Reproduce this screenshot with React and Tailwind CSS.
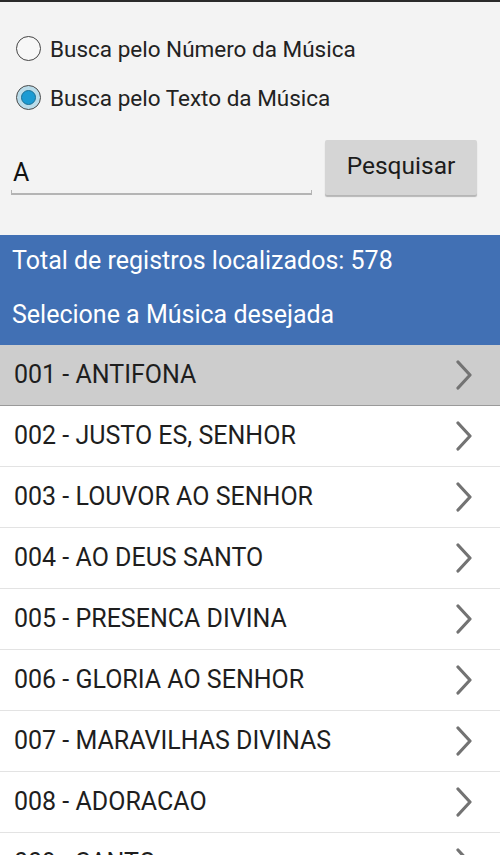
import { useState } from 'react'

const SONGS = [
  '001 - ANTIFONA',
  '002 - JUSTO ES, SENHOR',
  '003 - LOUVOR AO SENHOR',
  '004 - AO DEUS SANTO',
  '005 - PRESENCA DIVINA',
  '006 - GLORIA AO SENHOR',
  '007 - MARAVILHAS DIVINAS',
  '008 - ADORACAO',
  '009 - SANTO',
]

function Chevron() {
  return (
    <svg width="18" height="30" viewBox="0 0 18 30" className="shrink-0">
      <path d="M3 2 L15 15 L3 28" fill="none" stroke="#737373" strokeWidth="3.2" strokeLinecap="round" strokeLinejoin="round" />
    </svg>
  )
}

function Radio({ checked }) {
  if (checked) {
    return (
      <span className="flex h-[25px] w-[25px] shrink-0 items-center justify-center rounded-full border border-[#4a4a4a] bg-[#b9dcea]">
        <span className="h-[15px] w-[15px] rounded-full border border-[#1a6f94] bg-[#1b9bd3]" />
      </span>
    )
  }
  return <span className="h-[25px] w-[25px] shrink-0 rounded-full border-[1.5px] border-[#444] bg-[#f7f7f7]" />
}

export default function App() {
  const [mode, setMode] = useState('texto')

  return (
    <div className="h-[855px] w-[500px] overflow-hidden bg-[#f3f3f3] font-['Roboto',sans-serif]">
      <div className="h-[2px] bg-[#2a2a2a]" />

      {/* search options */}
      <div className="flex flex-col gap-[24px] pl-[16px] pt-[34px]">
        <button onClick={() => setMode('numero')} className="flex items-center gap-[9px] text-left">
          <Radio checked={mode === 'numero'} />
          <span className="text-[22.5px] leading-[24px] text-[#222]">Busca pelo Número da Música</span>
        </button>
        <button onClick={() => setMode('texto')} className="flex items-center gap-[9px] text-left">
          <Radio checked={mode === 'texto'} />
          <span className="text-[22.5px] leading-[24px] text-[#222]">Busca pelo Texto da Música</span>
        </button>
      </div>

      <div className="mt-[30px] flex items-start pl-[11px] pr-[23px]">
        <div className="relative mt-[14px] h-[40px] w-[301px]">
          <span className="absolute left-[2px] top-[4px] text-[25px] leading-[30px] text-[#111]">A</span>
          <div className="absolute bottom-[-1px] left-0 h-[5px] w-full border-x border-b-2 border-[#b4b4b4]" />
        </div>
        <button className="ml-auto h-[55px] w-[152px] rounded-[2px] bg-[#d5d5d5] pb-[2px] text-[24.5px] text-[#1c1c1c] shadow-[0_2px_1px_rgba(0,0,0,0.25)]">
          Pesquisar
        </button>
      </div>

      {/* results header */}
      <div className="mt-[40px] flex h-[110px] flex-col justify-between bg-[#4170b4] px-[12px] pb-[16px] pt-[12px] text-[25px] leading-[28px] text-white">
        <p>Total de registros localizados: 578</p>
        <p>Selecione a Música desejada</p>
      </div>

      <ul className="bg-white">
        {SONGS.map((song, i) => (
          <li
            key={song}
            className={`flex h-[61px] items-center justify-between border-b pl-[14px] pr-[27px] ${
              i === 0 ? 'border-[#9a9a9a] bg-[#cdcdcd]' : 'border-[#e3e3e3] bg-white'
            }`}
          >
            <span className="text-[25px] leading-[30px] text-[#1e1e1e]">{song}</span>
            <Chevron />
          </li>
        ))}
      </ul>
    </div>
  )
}
